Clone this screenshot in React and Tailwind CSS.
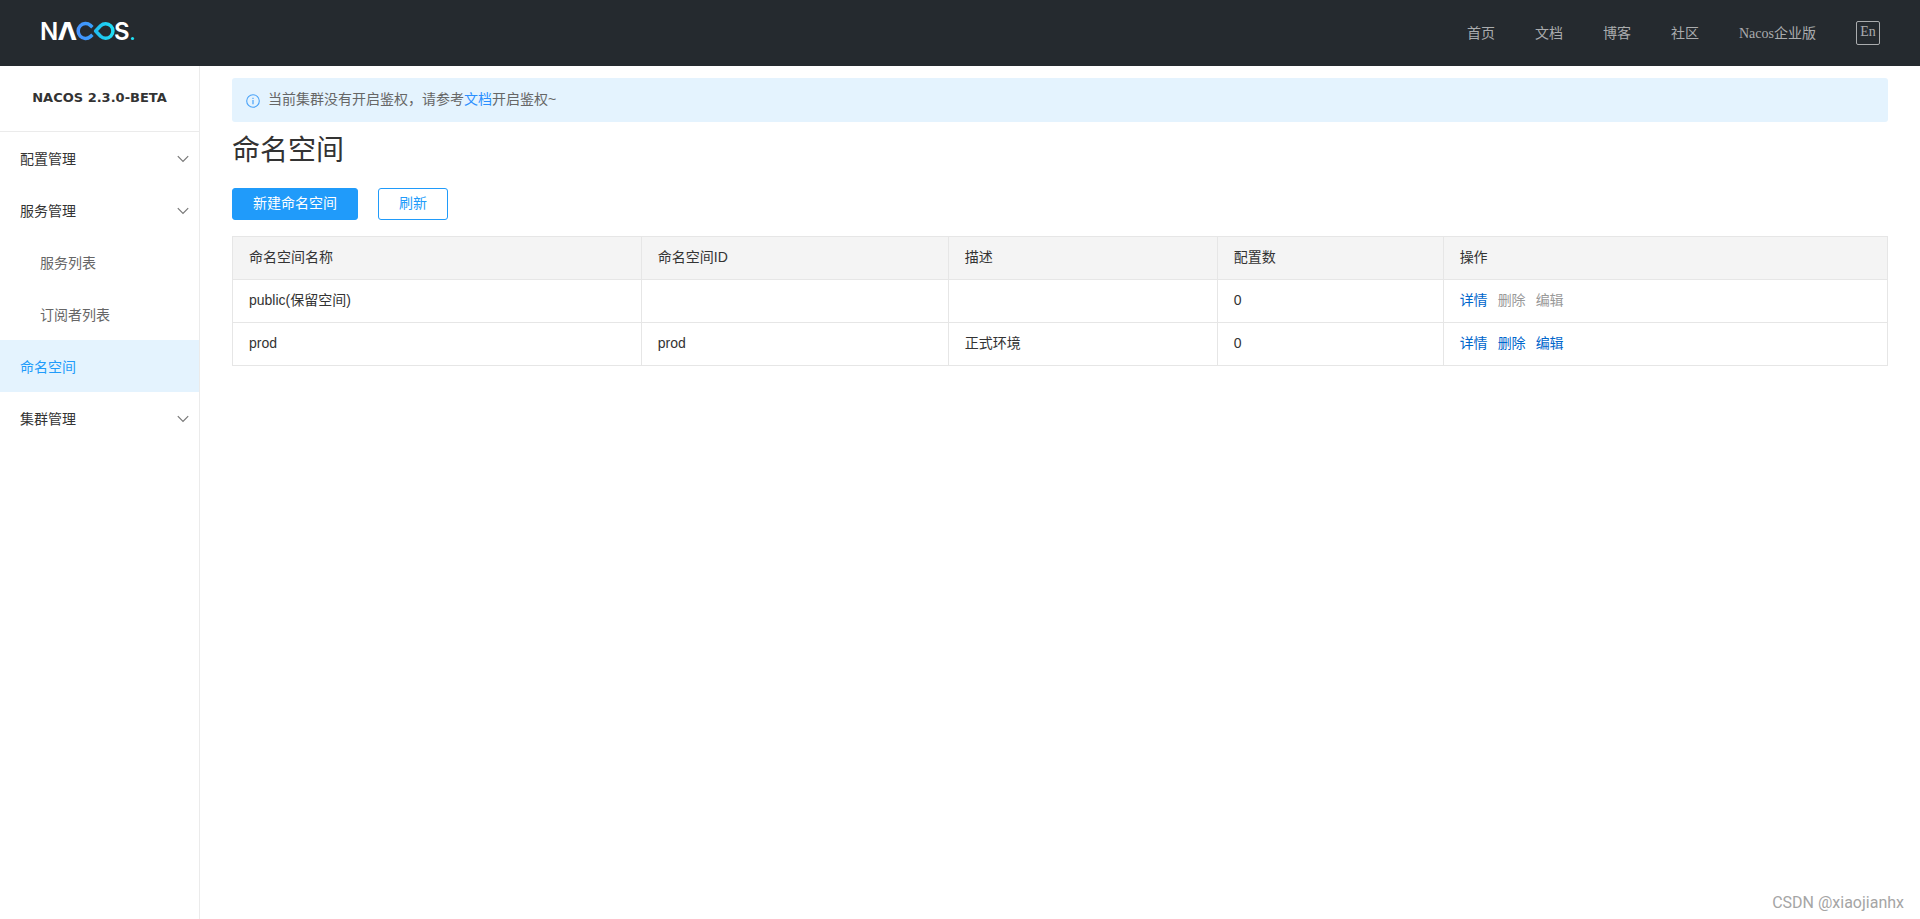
import { useState } from 'react'

const NAV_LINKS = ['首页', '文档', '博客', '社区', 'Nacos企业版']

const MENU = [
  { key: 'config', label: '配置管理', open: false, children: ['配置列表', '历史版本', '监听查询'] },
  { key: 'service', label: '服务管理', open: true, children: ['服务列表', '订阅者列表'] },
  { key: 'namespace', label: '命名空间' },
  { key: 'cluster', label: '集群管理', open: false, children: ['节点列表'] },
]

const NAMESPACES = [
  { name: 'public(保留空间)', id: '', desc: '', count: 0, reserved: true },
  { name: 'prod', id: 'prod', desc: '正式环境', count: 0, reserved: false },
]

function Logo() {
  return (
    <svg width="100" height="36" viewBox="0 0 100 36" role="img" aria-label="NACOS" className="block">
      <defs>
        <linearGradient id="ring" gradientUnits="userSpaceOnUse" x1="36" y1="0" x2="75" y2="0">
          <stop offset="0" stopColor="#4791ff" />
          <stop offset="0.4" stopColor="#3a9dfb" />
          <stop offset="0.5" stopColor="#1fbdf0" />
          <stop offset="1" stopColor="#1fe0f5" />
        </linearGradient>
      </defs>
      <g fill="#fff" fontSize="24" fontWeight="600" className="font-['Inter',sans-serif]">
        <text x="0" y="27">N</text>
        <text x="18" y="27" fontWeight="700" className="font-['DejaVu_Sans',sans-serif]">Λ</text>
        <text x="74" y="27">S</text>
      </g>
      {/* linked rings */}
      <g fill="none" stroke="url(#ring)" strokeWidth="3.5">
        <path d="M52.4 14.2 L50.4 12.4 A7.4 7.4 0 1 0 50.4 23.6 L52.4 21.8" />
        <path d="M55.6 18 L60.6 12.7 A7.3 7.3 0 1 1 60.6 23.3 Z" strokeLinejoin="round" />
      </g>
      <circle cx="92.5" cy="25.5" r="1.6" fill="#1fe0f5" />
    </svg>
  )
}

function Header() {
  return (
    <header className="h-[66px] shrink-0 bg-[#252a2f] flex items-center justify-between px-10 font-['Liberation_Serif','Noto_Sans_CJK_SC',serif]">
      <a href="#home" className="mb-1">
        <Logo />
      </a>
      <nav className="flex items-center gap-10 text-sm text-[#aaacae]">
        {NAV_LINKS.map((label) => (
          <a key={label} href={`#${label}`} className="pt-0.5">
            {label}
          </a>
        ))}
        <button className="size-6 border border-[#aaacae] rounded-xs leading-5 flex justify-center">
          En
        </button>
      </nav>
    </header>
  )
}

function Chevron() {
  return (
    <svg width="12" height="12" viewBox="0 0 12 12" fill="none" stroke="#777" strokeWidth="1.2">
      <path d="M0.8 3.2 L6 8.4 L11.2 3.2" />
    </svg>
  )
}

function Sidebar() {
  const [menu, setMenu] = useState(MENU)

  const toggle = (key) => {
    setMenu(menu.map((item) => (item.key === key ? { ...item, open: !item.open } : item)))
  }

  return (
    <aside className="w-[200px] shrink-0 border-r border-[#ebebeb]">
      <h1 className="h-[66px] border-b border-[#ebebeb] flex items-center justify-center text-[13px] font-bold font-['DejaVu_Sans',sans-serif]">
        NACOS 2.3.0-BETA
      </h1>
      <ul>
        {menu.map((item) => (
          <li key={item.key}>
            {item.children ? (
              <button
                onClick={() => toggle(item.key)}
                className="w-full h-13 pt-0.5 pl-5 pr-2.5 flex items-center justify-between"
              >
                {item.label}
                <Chevron />
              </button>
            ) : (
              <a
                href={`#${item.key}`}
                className="h-13 pt-0.5 pl-5 flex items-center bg-[#e4f3fe] text-[#209bfa]"
              >
                {item.label}
              </a>
            )}
            {item.open && (
              <ul>
                {item.children.map((child) => (
                  <li key={child}>
                    <a href={`#${child}`} className="h-13 pt-0.5 pl-10 flex items-center text-[#666]">
                      {child}
                    </a>
                  </li>
                ))}
              </ul>
            )}
          </li>
        ))}
      </ul>
    </aside>
  )
}

function AuthNotice() {
  return (
    <div className="h-11 rounded-[3px] bg-[#e4f3fe] flex items-center gap-2 px-3.5 pb-0.5 text-[#666]">
      <svg width="14" height="14" viewBox="0 0 14 14" fill="none" stroke="#4aa3f8" className="mt-1">
        <circle cx="7" cy="7" r="6.3" strokeWidth="1.1" />
        <path d="M7 6 V10.2 M7 3.8 V5" strokeWidth="1.2" />
      </svg>
      <p>
        当前集群没有开启鉴权，请参考
        <a href="#auth" className="text-[#2b8fff]">
          文档
        </a>
        开启鉴权~
      </p>
    </div>
  )
}

function NamespaceTable() {
  return (
    <table className="mt-4 w-full table-fixed border-collapse text-left [&_td]:border [&_td]:border-[#e6e6e6] [&_td]:px-4 [&_td]:pb-0.5 [&_th]:border [&_th]:border-[#e6e6e6] [&_th]:px-4 [&_th]:pb-0.5 [&_th]:font-normal">
      <colgroup>
        <col className="w-[24.7%]" />
        <col className="w-[18.55%]" />
        <col className="w-[16.25%]" />
        <col className="w-[13.65%]" />
        <col />
      </colgroup>
      <thead>
        <tr className="h-[43px] bg-[#f4f4f4]">
          <th>命名空间名称</th>
          <th>命名空间ID</th>
          <th>描述</th>
          <th>配置数</th>
          <th>操作</th>
        </tr>
      </thead>
      <tbody>
        {NAMESPACES.map((ns) => (
          <tr key={ns.name} className="h-[43px]">
            <td>{ns.name}</td>
            <td>{ns.id}</td>
            <td>{ns.desc}</td>
            <td>{ns.count}</td>
            <td>
              <div className="flex gap-2.5 text-[#06c]">
                <button>详情</button>
                <button disabled={ns.reserved} className="disabled:text-[#999]">
                  删除
                </button>
                <button disabled={ns.reserved} className="disabled:text-[#999]">
                  编辑
                </button>
              </div>
            </td>
          </tr>
        ))}
      </tbody>
    </table>
  )
}

export default function App() {
  return (
    <div className="relative min-h-screen flex flex-col bg-white text-sm text-[#333] font-['Liberation_Sans','Noto_Sans_CJK_SC',sans-serif]">
      <Header />
      <div className="flex-1 flex">
        <Sidebar />
        <main className="flex-1 px-8 pt-3">
          <AuthNotice />
          <h2 className="mt-2 mb-4 text-[28px] leading-[42px]">命名空间</h2>
          <div className="flex gap-5">
            <button className="h-8 px-5 pb-0.5 rounded-[3px] border border-[#209bfa] bg-[#209bfa] text-white">
              新建命名空间
            </button>
            <button className="h-8 px-5 pb-0.5 rounded-[3px] border border-[#209bfa] bg-white text-[#209bfa]">
              刷新
            </button>
          </div>
          <NamespaceTable />
        </main>
      </div>
      <div className="absolute right-4 bottom-1 text-base text-[#a5a5a5] font-['Roboto',sans-serif]">
        CSDN @xiaojianhx
      </div>
    </div>
  )
}
